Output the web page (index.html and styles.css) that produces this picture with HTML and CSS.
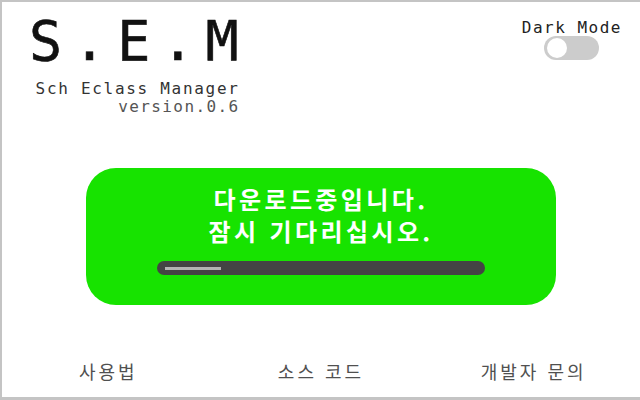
FILE: index.html
```html
<!DOCTYPE html>
<html lang="ko">
<head>
<meta charset="utf-8">
<link rel="stylesheet" href="styles.css">
</head>
<body>
<div class="frame">
  <header class="header">
    <div class="brand">
      <h1 class="title">S.E.M</h1>
      <div class="subtitle">Sch Eclass Manager</div>
      <div class="version">version.0.6</div>
    </div>
    <div class="mode">
      <div class="mode-label">Dark Mode</div>
      <div class="switch"><span class="knob"></span></div>
    </div>
  </header>
  <main class="main">
    <div class="card">
      <p class="msg">다운로드중입니다.<br>잠시 기다리십시오.</p>
      <div class="track"><div class="fill" style="width:56px"></div></div>
    </div>
  </main>
  <footer class="footer">
    <a class="link">사용법</a>
    <a class="link">소스 코드</a>
    <a class="link">개발자 문의</a>
  </footer>
</div>
</body>
</html>
```
FILE: styles.css
```css
html, body {
  margin: 0;
  padding: 0;
  background: #fff;
}
.frame {
  box-sizing: border-box;
  width: 640px;
  height: 400px;
  border-top: 2px solid #c4c4c4;
  border-left: 2px solid #c4c4c4;
  border-bottom: 3px solid #c4c4c4;
  display: flex;
  flex-direction: column;
  font-family: "DejaVu Sans Mono", monospace;
}
.header {
  display: flex;
  justify-content: space-between;
  align-items: flex-start;
  padding: 0 18px 0 27px;
}
.brand {
  display: flex;
  flex-direction: column;
  align-items: flex-end;
}
.title {
  margin: 3px -11px 0 0;
  font-weight: normal;
  font-size: 55px;
  line-height: 72px;
  letter-spacing: 11px;
  color: #111;
  -webkit-text-stroke: 0.6px #111;
}
.subtitle {
  font-size: 16px;
  line-height: 18px;
  letter-spacing: 1.7px;
  margin-right: -1px;
  margin-top: 3px;
  color: #333;
}
.version {
  font-size: 16px;
  line-height: 18px;
  letter-spacing: 1.4px;
  margin-right: -1px;
  color: #555;
}
.mode {
  display: flex;
  flex-direction: column;
  align-items: center;
  padding-top: 17px;
}
.mode-label {
  font-size: 16px;
  line-height: 18px;
  letter-spacing: 1.5px;
  color: #222;
}
.switch {
  position: relative;
  width: 55px;
  height: 24px;
  border-radius: 12px;
  background: #cccccc;
  margin-top: -1px;
}
.knob {
  position: absolute;
  left: 3px;
  top: 2px;
  width: 20px;
  height: 20px;
  border-radius: 50%;
  background: #fff;
}
.main {
  flex: 1;
  display: flex;
  justify-content: center;
  align-items: flex-start;
  padding-top: 52px;
}
.card {
  width: 470px;
  height: 137px;
  box-sizing: border-box;
  background: #17e300;
  border-radius: 30px;
  display: flex;
  flex-direction: column;
  align-items: center;
  padding-top: 15px;
}
.msg {
  margin: 0;
  font-family: "Noto Sans CJK KR", sans-serif;
  font-weight: bold;
  font-size: 24px;
  line-height: 32px;
  letter-spacing: 3.4px;
  color: #fff;
  text-align: center;
}
.track {
  margin-top: 14px;
  width: 328px;
  height: 14px;
  border-radius: 7px;
  background: #444;
  box-sizing: border-box;
  padding: 6px 8px 0;
}
.fill {
  height: 3px;
  background: #b4b4b4;
}
.footer {
  display: grid;
  grid-template-columns: 1fr 1fr 1fr;
  padding-bottom: 14px;
}
.link {
  text-align: center;
  font-family: "Noto Sans CJK KR", sans-serif;
  font-size: 18px;
  line-height: 24px;
  letter-spacing: 3px;
  color: #505050;
}
```
